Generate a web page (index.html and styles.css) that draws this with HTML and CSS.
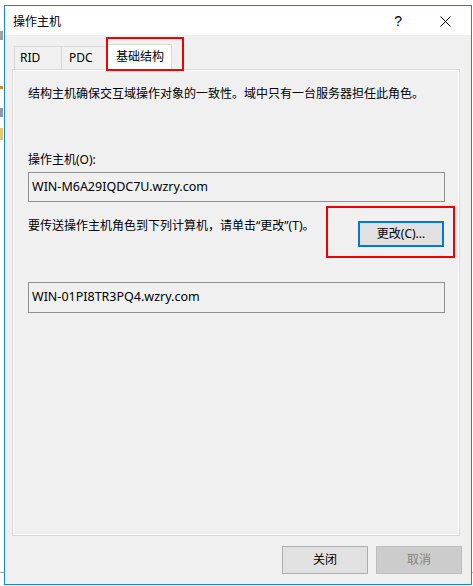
FILE: index.html
```html
<!DOCTYPE html>
<html lang="zh-CN">
<head>
<meta charset="utf-8">
<title>操作主机</title>
<link rel="stylesheet" href="styles.css">
</head>
<body>
<div class="backdrop">
  <span class="bg-bit bit-a"></span>
  <span class="bg-bit bit-b"></span>
  <span class="bg-bit bit-c"></span>
  <span class="bg-bit bit-d"></span>
  <span class="bg-line line-l"></span>
  <span class="bg-line line-r"></span>
</div>
<div class="window">
  <div class="titlebar">
    <span class="title">操作主机</span>
    <span class="help">?</span>
    <span class="close">
      <svg width="11" height="11" viewBox="0 0 11 11"><path d="M0.5 0.5 L10.5 10.5 M10.5 0.5 L0.5 10.5" stroke="#000" stroke-width="1" fill="none"/></svg>
    </span>
  </div>
  <div class="client">
    <div class="tabs">
      <div class="tab tab-rid">RID</div>
      <div class="tab tab-pdc">PDC</div>
      <div class="tab active">基础结构</div>
      <span class="mark mark-tab"></span>
    </div>
    <div class="panel">
      <p class="desc">结构主机确保交互域操作对象的一致性。域中只有一台服务器担任此角色。</p>
      <p class="label">操作主机(O):</p>
      <div class="field">WIN-M6A29IQDC7U.wzry.com</div>
      <div class="row">
        <p class="hint">要传送操作主机角色到下列计算机，请单击“更改”(T)。</p>
        <div class="btn-wrap">
          <button class="btn default">更改(C)...</button>
          <span class="mark mark-btn"></span>
        </div>
      </div>
      <div class="field field2">WIN-01PI8TR3PQ4.wzry.com</div>
    </div>
    <div class="footer">
      <button class="btn">关闭</button>
      <button class="btn" disabled>取消</button>
    </div>
  </div>
</div>
</body>
</html>
```
FILE: styles.css
```css
* { box-sizing: border-box; }
html, body { margin: 0; padding: 0; }
body {
  width: 473px;
  height: 586px;
  background: #ffffff;
  font-family: "Noto Sans", "Noto Sans CJK SC", sans-serif;
  font-size: 12px;
  line-height: 16px;
  color: #000;
  position: relative;
  overflow: hidden;
}
.backdrop { position: absolute; inset: 0; }
.bg-bit { position: absolute; display: block; }
.bit-a { left: 0; top: 31px; width: 3px; height: 9px; background: #9aa0a8; }
.bit-b { left: 0; top: 86px; width: 3px; height: 3px; background: #d7892b; }
.bit-c { left: 0; top: 108px; width: 3px; height: 9px; background: #8b98a6; }
.bit-d { left: 0; top: 128px; width: 3px; height: 12px; background: #e8c66a; }
.bg-line { position: absolute; height: 1px; background: #a9a9a9; top: 572px; }
.line-l { left: 0; width: 4px; }
.line-r { left: 471px; width: 2px; }

.window {
  position: relative;
  margin: 5px 0 0 4px;
  width: 468px;
  height: 580px;
  border: 1px solid #1883d7;
  background: #f0f0f0;
  display: flex;
  flex-direction: column;
}
.titlebar {
  height: 29px;
  background: #fff;
  display: flex;
  align-items: center;
  flex: none;
}
.title {
  margin-left: 8px;
  font-family: "Noto Sans CJK SC", sans-serif;
  font-size: 12px;
  margin-top: 0px;
}
.help {
  margin-left: auto;
  font-family: "Liberation Sans", sans-serif;
  font-size: 14px;
  margin-right: 38px;
}
.close {
  display: flex;
  margin-right: 20px;
  margin-top: 1px;
}
.client {
  flex: 1;
  display: flex;
  flex-direction: column;
}
.tabs {
  position: relative;
  display: flex;
  align-items: flex-end;
  height: 25px;
  margin: 9px 0 0 9px;
}
.tab {
  height: 23px;
  border: 1px solid #d9d9d9;
  border-bottom: none;
  border-right: none;
  background: #f0f0f0;
  padding-left: 5px;
  line-height: 22px;
  font-size: 12px;
}
.tab-rid { width: 47px; }
.tab-pdc { width: 46px; padding-left: 7px; }
.tab.active {
  position: relative;
  z-index: 2;
  width: 65px;
  height: 26px;
  margin-bottom: -1px;
  background: #fff;
  border-right: 1px solid #d9d9d9;
  padding-left: 8px;
  line-height: 24px;
}
.mark {
  position: absolute;
  border: 2px solid #f00000;
  z-index: 5;
  pointer-events: none;
}
.mark-tab { left: 92px; top: -7px; width: 78px; height: 34px; }

.panel {
  margin: 0 11px 0 7px;
  height: 467px;
  border: 1px solid #d9d9d9;
  box-shadow: inset 0 0 0 1px #fff;
  background: #f0f0f0;
  padding: 15px 14px 0 15px;
  flex: none;
}
p { margin: 0; }
.desc { font-family: "Noto Sans CJK SC", sans-serif; }
.label { margin-top: 51px; }
.field {
  margin-top: 4px;
  height: 30px;
  border: 1px solid #8f8f8f;
  background: #f0f0f0;
  padding: 0 3px;
  line-height: 27px;
  font-size: 12.5px;
}
.row {
  display: flex;
  justify-content: space-between;
  align-items: flex-start;
  margin-top: 16px;
}
.hint { font-family: "Noto Sans", "Noto Sans CJK SC", sans-serif; }
.btn-wrap { position: relative; margin-top: 3px; margin-right: 1px; }
.mark-btn { left: -32px; top: -15px; width: 129px; height: 52px; }
.field2 { margin-top: 35px; height: 31px; line-height: 28px; }

.btn {
  font-family: "Noto Sans", "Noto Sans CJK SC", sans-serif;
  font-size: 12px;
  line-height: 16px;
  color: #000;
  width: 86px;
  height: 28px;
  border: 1px solid #adadad;
  background: #e1e1e1;
  padding: 0;
  margin: 0;
}
.btn.default {
  height: 26px;
  width: 86px;
  border: 2px solid #0078d7;
}
.btn:disabled {
  background: #cccccc;
  border-color: #bfbfbf;
  color: #838383;
}
.footer {
  display: flex;
  justify-content: flex-end;
  gap: 8px;
  margin: 10px 9px 0 0;
}
```
